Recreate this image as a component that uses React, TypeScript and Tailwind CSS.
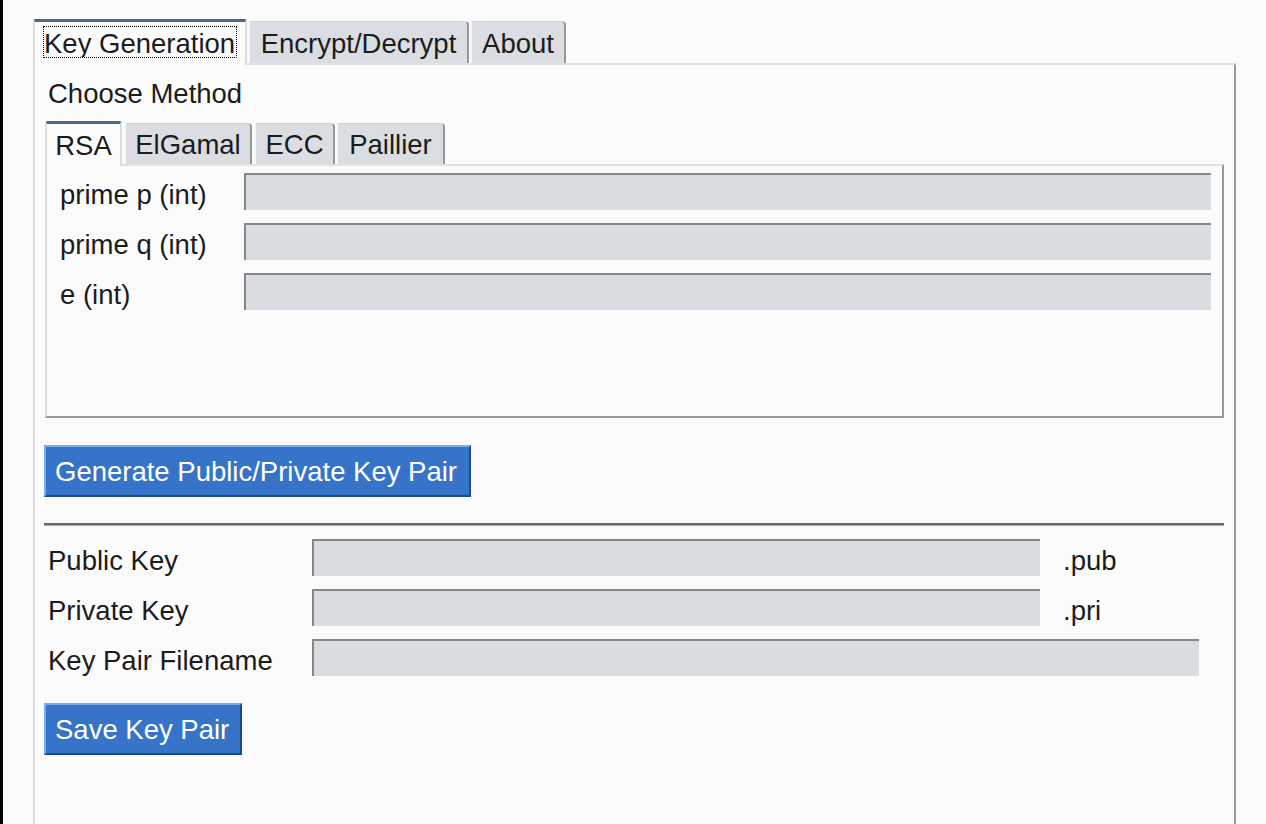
import React from "react";

function OuterTab({ label, selected, width }: { label: string; selected?: boolean; width: string }) {
  if (selected) {
    return (
      <div
        className={`relative z-10 h-[46px] ${width} shrink-0 rounded-t-[3px] border-x-2 border-t-[3px] border-x-[#dcdcdc] border-t-[#4a6984] bg-[#fbfbfb] pl-[8px] pt-[4px]`}
      >
        <span className="block h-[32px] w-[194px] overflow-hidden whitespace-nowrap border border-dotted border-black leading-[33px]">
          {label}
        </span>
      </div>
    );
  }
  return (
    <div
      className={`mt-[2px] ml-[2px] flex h-[42px] ${width} shrink-0 items-center justify-center whitespace-nowrap rounded-tr-[4px] border-l border-r-2 border-t border-l-[#f4f5f6] border-r-[#979797] border-t-[#cfd3d7] bg-[#dadee2] pt-[2px]`}
    >
      {label}
    </div>
  );
}

function InnerTab({ label, selected, width, gap }: { label: string; selected?: boolean; width: string; gap?: string }) {
  if (selected) {
    return (
      <div
        className={`relative z-10 flex h-[45px] ${width} shrink-0 items-center justify-center rounded-t-[3px] border-x-2 border-t-[3px] border-x-[#dcdcdc] border-t-[#4a6984] bg-[#fbfbfb] pt-[2px]`}
      >
        {label}
      </div>
    );
  }
  return (
    <div
      className={`mt-[2px] ${gap ?? ""} flex h-[41px] ${width} shrink-0 items-center justify-center rounded-tr-[4px] border-l border-r-2 border-t border-l-[#f4f5f6] border-r-[#979797] border-t-[#cfd3d7] bg-[#dadee2] pt-[2px]`}
    >
      {label}
    </div>
  );
}

function Entry({ width }: { width: string }) {
  return (
    <input
      readOnly
      className={`h-[37px] ${width} shrink-0 border-l-2 border-t-2 border-[#878787] bg-[#d9dde1] outline-none`}
    />
  );
}

function Label({ text, width }: { text: string; width?: string }) {
  return <span className={`block h-[37px] ${width ?? ""} shrink-0 whitespace-nowrap leading-[44px]`}>{text}</span>;
}

function BlueButton({ label, width }: { label: string; width: string }) {
  return (
    <button
      className={`flex h-[52px] ${width} items-center whitespace-nowrap border-2 border-b-[#1d4b8a] border-l-[#78acee] border-r-[#1d4b8a] border-t-[#78acee] bg-[#3574c8] pl-[9px] pt-[2px] text-white`}
    >
      {label}
    </button>
  );
}

export default function App() {
  const params = ["prime p (int)", "prime q (int)", "e (int)"];

  return (
    <div className="flex h-[824px] w-full overflow-hidden bg-[#fbfbfb] font-['Liberation_Sans',Arial,sans-serif] text-[27.5px] leading-[32px] text-[#1c1c1c]">
      <div className="w-[3px] shrink-0 bg-black" />
      <div className="ml-[30px] flex w-[1203px] shrink-0 flex-col pt-[19px]">
        {/* main notebook tabs */}
        <div className="flex h-[46px] items-start">
          <OuterTab label="Key Generation" selected width="w-[214px]" />
          <OuterTab label="Encrypt/Decrypt" width="w-[220px]" />
          <OuterTab label="About" width="w-[95px]" />
        </div>

        <div className="-mt-[2px] flex flex-1 flex-col border-l-2 border-r-2 border-t-2 border-l-[#dcdcdc] border-r-[#999] border-t-[#e2e2e2] pl-[9px] pr-[10px]">
          <div className="mt-[13px] pl-[4px]">Choose Method</div>

          {/* method notebook */}
          <div className="ml-[1px] mt-[11px] flex flex-col">
            <div className="flex h-[45px] items-start">
              <InnerTab label="RSA" selected width="w-[77px]" />
              <InnerTab label="ElGamal" width="w-[127px]" gap="ml-[3px]" />
              <InnerTab label="ECC" width="w-[80px]" gap="ml-[3px]" />
              <InnerTab label="Paillier" width="w-[108px]" gap="ml-[2px]" />
            </div>
            <div className="-mt-[2px] flex h-[254px] flex-col gap-[13px] border-2 border-b-[#999] border-l-[#dcdcdc] border-r-[#999] border-t-[#e2e2e2] pl-[13px] pr-[11px] pt-[7px]">
              {params.map((p) => (
                <div key={p} className="flex h-[37px] items-start">
                  <Label text={p} width="w-[184px]" />
                  <Entry width="flex-1" />
                </div>
              ))}
            </div>
          </div>

          <div className="mt-[27px]">
            <BlueButton label="Generate Public/Private Key Pair" width="w-[427px]" />
          </div>

          <div className="mt-[26px] h-[3px] border-b border-t-2 border-b-[#a9a9a9] border-t-[#6a6a6a]" />

          <div className="mt-[13px] flex flex-col gap-[13px] pl-[4px]">
            <div className="flex h-[37px] items-start">
              <Label text="Public Key" width="w-[264px]" />
              <Entry width="w-[728px]" />
              <span className="ml-[23px]">
                <Label text=".pub" />
              </span>
            </div>
            <div className="flex h-[37px] items-start">
              <Label text="Private Key" width="w-[264px]" />
              <Entry width="w-[728px]" />
              <span className="ml-[23px]">
                <Label text=".pri" />
              </span>
            </div>
            <div className="flex h-[37px] items-start">
              <Label text="Key Pair Filename" width="w-[264px]" />
              <Entry width="w-[887px]" />
            </div>
          </div>

          <div className="mt-[27px]">
            <BlueButton label="Save Key Pair" width="w-[198px]" />
          </div>
        </div>
      </div>
    </div>
  );
}
